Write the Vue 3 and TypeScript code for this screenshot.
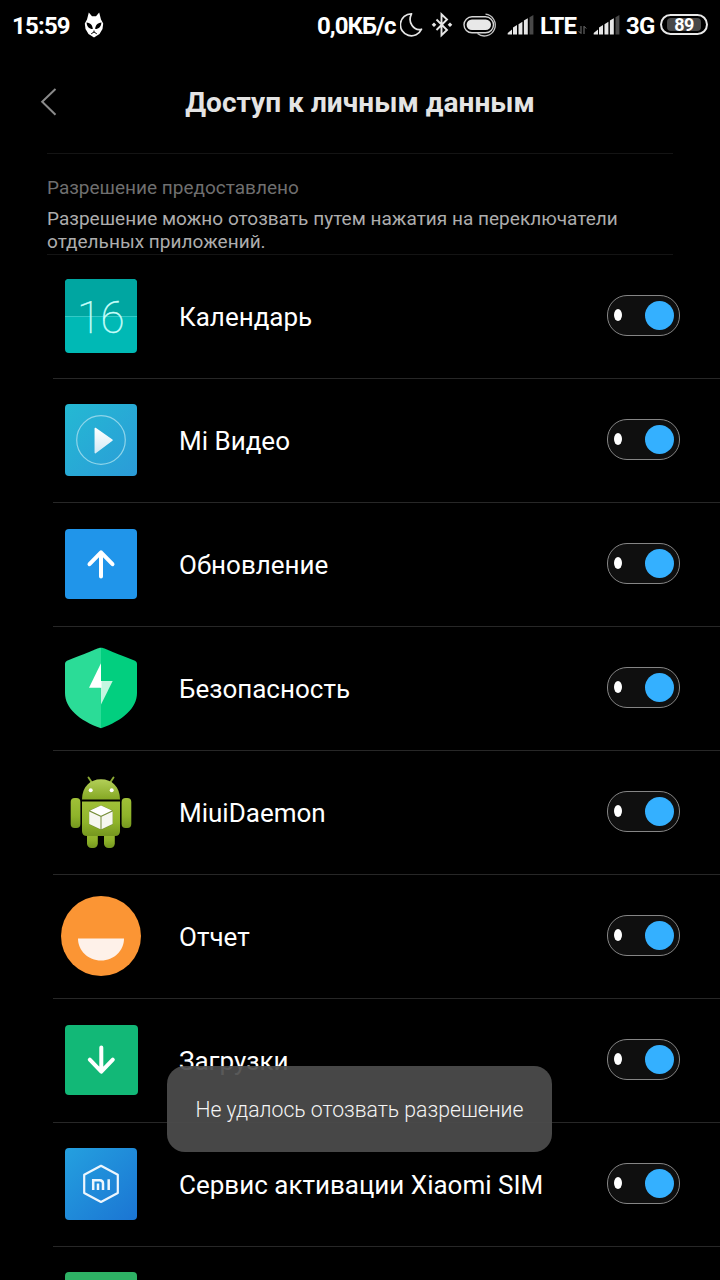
<script setup lang="ts">
type IconName = 'calendar' | 'video' | 'update' | 'security' | 'android' | 'report' | 'download' | 'sim' | 'green'

interface AppEntry {
  name: string
  icon: IconName
}

const apps: AppEntry[] = [
  { name: 'Календарь', icon: 'calendar' },
  { name: 'Mi Видео', icon: 'video' },
  { name: 'Обновление', icon: 'update' },
  { name: 'Безопасность', icon: 'security' },
  { name: 'MiuiDaemon', icon: 'android' },
  { name: 'Отчет', icon: 'report' },
  { name: 'Загрузки', icon: 'download' },
  { name: 'Сервис активации Xiaomi SIM', icon: 'sim' },
  { name: '', icon: 'green' },
]
</script>

<template>
  <main class="screen">
    <header class="status">
      <span class="st clock">15:59</span>
      <svg class="fox" width="20" height="26" viewBox="0 0 20 26">
        <path d="M4.800 .5 8 4.200h4L15.200 .5 17 7.500 19.200 11.500 18.500 17 15.500 22 10 25.500 4.500 22 1.500 17 .8 11.500 3 7.500Z" fill="#fff" />
        <path d="M2.600 10.400C6.500 10.700 8.800 13.500 8.800 17 5 17 2.800 14.300 2.600 10.400ZM17.400 10.400C13.500 10.700 11.200 13.500 11.200 17 15 17 17.200 14.300 17.400 10.400Z" fill="#000" />
        <path d="M7.200 21.800 10 20l2.800 1.800M10 20v-1.500" fill="none" stroke="#000" stroke-width="1" />
      </svg>
      <span class="st speed">0,0КБ/с</span>
      <svg class="moon" width="24" height="26" viewBox="0 0 24 26">
        <path d="M11.500 1.800A11 11 0 1 0 21.500 17.200C14 19.200 7.200 10.500 11.500 1.800Z" fill="none" stroke="#e6e6e6" stroke-width="1.700" stroke-linejoin="round" />
      </svg>
      <svg class="bt" width="20" height="26" viewBox="0 0 20 26">
        <path d="m4.500 7.500 10.500 10.500-5.500 5.200V2.300L15 7.500 4.500 18" fill="none" stroke="#e6e6e6" stroke-width="1.900" />
        <path d="m2 10.400 2.300 2.300-2.300 2.300-2.300-2.300ZM18 10.400l2.300 2.300-2.300 2.300-2.300-2.300Z" fill="#e6e6e6" />
      </svg>
      <svg class="saver" width="36" height="26" viewBox="0 0 36 26">
        <path d="M22.500 2.200A10.900 10.900 0 1 1 14.500 21.500" fill="none" stroke="#c4c4c4" stroke-width="1.300" />
        <rect x="1" y="4.800" width="29.500" height="16" rx="8" fill="#000" stroke="#d5d5d5" stroke-width="1.400" />
        <rect x="3.600" y="7.500" width="24.400" height="10.600" rx="5.300" fill="#e8e8e8" />
      </svg>
      <svg class="signal" width="28" height="22" viewBox="0 0 28 22">
        <path d="M.7 20.500v-1.500l4.300-3.500v5ZM6 20.500v-7l4-2.500v9.500ZM11.500 20.500V10.200l3.900-2.500v12.800ZM16.900 20.500V6.500L20.800 4.200v16.300Z" fill="#e6e6e6" />
        <path d="M22.500 20.500V3.200l3.900-2.200v19.500Z" fill="#484848" />
      </svg>
      <span class="st lte">LTE</span>
      <svg class="arrows" width="9" height="10" viewBox="0 0 9 10">
        <path d="M3 1v7.500L.8 6.300M6 9V1.300l2.200 2.200" fill="none" stroke="#777" stroke-width="1" />
      </svg>
      <svg class="signal second" width="28" height="22" viewBox="0 0 28 22">
        <path d="M.7 20.500v-1.500l4.300-3.500v5ZM6 20.500v-7l4-2.500v9.500ZM11.500 20.500V10.200l3.900-2.500v12.800ZM16.900 20.500V6.500L20.800 4.200v16.300Z" fill="#e6e6e6" />
        <path d="M22.500 20.500V3.200l3.900-2.200v19.500Z" fill="#484848" />
      </svg>
      <span class="st g3">3G</span>
      <span class="battery"><span class="charge">89</span></span>
    </header>

    <section class="title-bar">
      <svg class="back" width="20" height="30" viewBox="0 0 20 30">
        <path d="M15.500 2 2.200 14.700 15.500 27.700" fill="none" stroke="#8a8a8a" stroke-width="2" />
      </svg>
      <h1>Доступ к личным данным</h1>
    </section>

    <section class="intro">
      <h2>Разрешение предоставлено</h2>
      <p>Разрешение можно отозвать путем нажатия на переключатели<br>отдельных приложений.</p>
    </section>

    <ul class="apps">
      <li v-for="app in apps" :key="app.icon" class="row">
        <svg class="icon" width="84" height="84" viewBox="0 0 84 84">
          <g v-if="app.icon === 'calendar'">
            <rect x="6" y="5" width="72" height="74" rx="4" fill="#00b9b5" />
            <path d="M6 42.500V9a4 4 0 0 1 4-4h64a4 4 0 0 1 4 4v33.500Z" fill="#00a6a1" />
            <path d="M6 42.500h72" stroke="#33c9c5" stroke-width="1" />
            <text x="41.500" y="58.500" text-anchor="middle" class="day">16</text>
          </g>
          <g v-else-if="app.icon === 'video'">
            <defs>
              <linearGradient id="video-bg" x1="0" y1="0" x2="1" y2="1">
                <stop offset="0" stop-color="#24b9d3" /><stop offset="1" stop-color="#2b9bd8" />
              </linearGradient>
              <linearGradient id="play-bg" x1="0" y1="0" x2="0" y2="1">
                <stop offset="0" stop-color="#fff" /><stop offset="1" stop-color="#d4eaf5" />
              </linearGradient>
            </defs>
            <rect x="6" y="6" width="72" height="72" rx="4" fill="url(#video-bg)" />
            <circle cx="42" cy="42" r="24.300" fill="none" stroke="#8fd5ea" stroke-width="1.200" />
            <path d="M36.300 30.400 53 42.200 36.300 54.600Z" fill="url(#play-bg)" stroke="url(#play-bg)" stroke-width="1.500" stroke-linejoin="round" />
          </g>
          <g v-else-if="app.icon === 'update'">
            <rect x="6" y="7" width="72" height="70" rx="4" fill="#2095ea" />
            <path d="M42 54.500V30.500M30.500 42.200 42 30.300 53.500 42.200" class="arrow" />
          </g>
          <g v-else-if="app.icon === 'security'">
            <path d="M42 1.700C39 1.700 36 4 8 14.700q-2 .8-2 3V47c0 15 14 27.500 36 35.300Z" fill="#2bdc97" />
            <path d="M42 1.700C45 1.700 48 4 76 14.700q2 .8 2 3V47c0 15-14 27.500-36 35.300Z" fill="#02cf7f" />
            <path d="M42 17.300 30 41.700H42Z" fill="#fff" />
            <path d="M42 35H53.700L42 58.500Z" fill="#c4f6e0" />
            <path d="M42 35v6.700" stroke="#fff" stroke-width="1" />
          </g>
          <g v-else-if="app.icon === 'android'">
            <defs>
              <linearGradient id="droid" x1="0" y1="0" x2="0" y2="1">
                <stop offset="0" stop-color="#a0c038" /><stop offset=".6" stop-color="#8fb32a" /><stop offset="1" stop-color="#75971f" />
              </linearGradient>
              <linearGradient id="droid-head" x1="0" y1="0" x2="0" y2="1">
                <stop offset="0" stop-color="#b3cf58" /><stop offset="1" stop-color="#85a824" />
              </linearGradient>
            </defs>
            <path d="m29.500 7.500 4 6M54.500 7.500l-4 6" stroke="#8cab35" stroke-width="1.900" stroke-linecap="round" />
            <path d="M23 29.500C23 17 31 9.300 42 9.300S61 17 61 29.500Z" fill="url(#droid-head)" />
            <circle cx="31.700" cy="20.300" r="2" fill="#fff" />
            <circle cx="52.700" cy="20.300" r="2" fill="#fff" />
            <rect x="11.700" y="28" width="9.700" height="30" rx="4" fill="url(#droid)" />
            <rect x="62.600" y="28" width="9.700" height="30" rx="4" fill="url(#droid)" />
            <rect x="28" y="58" width="10.800" height="20" rx="4.500" fill="url(#droid)" />
            <rect x="45" y="58" width="10.800" height="20" rx="4.500" fill="url(#droid)" />
            <path d="M23 31.500H61V61q0 5-5 5H28q-5 0-5-5Z" fill="url(#droid)" />
            <path d="M42 35.200 53.800 40.500V54.500L42 60 30 54.500V40.500Z" fill="#758d38" />
            <path d="M42 35.600 53 40.600 42 45.800 31 40.600Z" fill="#fff" />
            <path d="M30.200 41.600 41.500 46.800v12.400L30.200 54ZM53.600 41.600 42.500 46.800v12.400L53.600 54Z" fill="#f6f7f1" />
          </g>
          <g v-else-if="app.icon === 'report'">
            <circle cx="42" cy="42" r="40" fill="#fb9534" />
            <path d="M19 44.500H65C65 56.500 55 66.500 42 66.500S19 56.500 19 44.500Z" fill="#fef1e9" />
          </g>
          <g v-else-if="app.icon === 'download'">
            <rect x="6" y="7" width="73" height="70" rx="4" fill="#12b877" />
            <path d="M42.300 29.500V53.500M30.800 41.700 42.300 53.700 53.800 41.700" class="arrow" />
          </g>
          <g v-else-if="app.icon === 'sim'">
            <defs>
              <linearGradient id="sim-bg" x1="0" y1="0" x2="1" y2="1">
                <stop offset="0" stop-color="#24a0df" /><stop offset="1" stop-color="#1b75d3" />
              </linearGradient>
            </defs>
            <rect x="6" y="6" width="72" height="72" rx="4" fill="url(#sim-bg)" />
            <path d="M42 23.800 58.800 32.700V51L42 60 25.200 51V32.700Z" fill="none" stroke="#edf6fd" stroke-width="2.200" stroke-linejoin="round" />
            <path d="M34.200 48V38.200h6.500q3.300 0 3.300 3.300V48M39 41.500V48M49.700 37.200v10.800" fill="none" stroke="#edf6fd" stroke-width="2.500" />
          </g>
          <g v-else>
            <rect x="6" y="6" width="72" height="72" rx="4" fill="#2eb265" />
          </g>
        </svg>
        <span class="name">{{ app.name }}</span>
        <span class="toggle"><i class="mark"></i><i class="knob"></i></span>
      </li>
    </ul>

    <div class="toast">Не удалось отозвать разрешение</div>
  </main>
</template>

<style>
body {
  background: #000;
}
</style>

<style scoped>
.screen {
  position: relative;
  width: 720px;
  height: 1280px;
  overflow: hidden;
  background: #000;
  color: #fff;
  font-family: Roboto, "Noto Sans", sans-serif;
}
.status {
  display: flex;
  align-items: flex-start;
  height: 50px;
  padding-left: 12px;
  box-sizing: border-box;
}
.status > * {
  flex: none;
}
.st {
  height: 50px;
  line-height: 53px;
  font-size: 24px;
  font-weight: 700;
  letter-spacing: -0.8px;
  white-space: nowrap;
}
.clock { width: 72px; }
.fox { margin-top: 12px; }
.speed { width: 82px; margin-left: 213px; letter-spacing: -1px; }
.moon { margin: 12px 0 0 1px; }
.bt { margin: 12px 0 0 8px; overflow: visible; }
.saver { margin: 12px 0 0 11px; }
.signal { margin: 14px 0 0 8px; }
.lte { width: 38px; margin-left: 5px; }
.arrows { margin: 25px 0 0 0; }
.signal.second { margin-left: 6px; }
.g3 { width: 29px; margin-left: 5px; }
.battery {
  display: flex;
  width: 48px;
  height: 21px;
  margin: 14px 0 0 5px;
  padding: 2px 5px;
  box-sizing: border-box;
  border: 2px solid #e8e8e8;
  border-radius: 11px;
}
.charge {
  flex: 1;
  border-radius: 4px;
  background: #484848;
  font-size: 18px;
  font-weight: 700;
  letter-spacing: -0.6px;
  line-height: 14px;
  text-align: center;
}
.title-bar {
  display: flex;
  align-items: center;
  height: 103px;
  margin: 0 47px;
}
.back {
  margin-left: -7px;
}
h1 {
  flex: 1;
  margin: 2px 13px 0 0;
  color: #e4e4e4;
  font-size: 28px;
  font-weight: 700;
  letter-spacing: 0.05px;
  line-height: 36px;
  text-align: center;
  white-space: nowrap;
}
.intro {
  height: 102px;
  margin: 0 47px;
  padding-top: 22px;
  box-sizing: border-box;
  border-top: 1px solid #141414;
  border-bottom: 1px solid #141414;
}
h2,
p {
  margin: 0;
  font-size: 19px;
  font-weight: 400;
  line-height: 23px;
  white-space: nowrap;
}
h2 { color: #6f6f6f; }
p {
  margin-top: 8px;
  color: #adadad;
  letter-spacing: 0.02px;
}
.apps {
  margin: 0;
  padding: 0;
  list-style: none;
}
.row {
  display: flex;
  align-items: center;
  height: 124px;
  margin-left: 53px;
  padding: 0 40px 1px 6px;
  box-sizing: border-box;
  border-bottom: 1px solid #272727;
}
.icon { flex: none; }
.day {
  fill: #c9fffb;
  stroke: #c9fffb;
  stroke-width: 0.4px;
  font-family: Roboto, sans-serif;
  font-size: 44px;
  font-weight: 100;
  letter-spacing: -0.5px;
}
.arrow {
  fill: none;
  stroke: #fff;
  stroke-width: 4;
  stroke-linecap: round;
  stroke-linejoin: round;
}
.name {
  flex: 1;
  margin-left: 36px;
  font-size: 26px;
  line-height: 34px;
  padding-top: 1px;
  white-space: nowrap;
}
.toggle {
  display: flex;
  align-items: center;
  justify-content: space-between;
  width: 73px;
  height: 41px;
  margin-bottom: 2px;
  padding: 0 5px 0 6px;
  box-sizing: border-box;
  border: 1px solid #858585;
  border-radius: 20px;
  background: #0f0f0f;
}
.mark {
  width: 8px;
  height: 12px;
  border-radius: 50%;
  background: #fff;
}
.knob {
  width: 29px;
  height: 29px;
  border-radius: 50%;
  background: #34b0ff;
}
.toast {
  position: absolute;
  left: 167px;
  top: 1066px;
  width: 385px;
  height: 86px;
  border-radius: 18px;
  background: rgba(76, 76, 76, 0.93);
  font-size: 21.2px;
  font-weight: 300;
  line-height: 88px;
  text-align: center;
  white-space: nowrap;
  color: #f4f4f4;
}
</style>
